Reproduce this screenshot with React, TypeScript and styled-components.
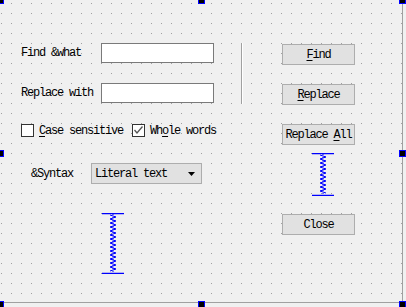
import React from "react";
import styled, { createGlobalStyle } from "styled-components";

const Global = createGlobalStyle`
  html, body { margin: 0; padding: 0; background: #f0f0f0; }
  body { width: 406px; height: 307px; overflow: hidden; }
  * { box-sizing: border-box; }
`;

const dot =
  "url(\"data:image/svg+xml,%3Csvg xmlns='http://www.w3.org/2000/svg' width='10' height='10'%3E%3Crect x='1' y='3' width='1' height='1' fill='%23a0a0a0'/%3E%3C/svg%3E\")";

const Canvas = styled.div`
  position: relative;
  width: 406px;
  height: 307px;
  overflow: hidden;
`;

const Form = styled.div`
  position: relative;
  width: 403px;
  height: 303px;
  background-color: #f0f0f0;
  background-image: ${dot};
  border-right: 1px solid #a0a0a0;
  border-bottom: 1px solid #a0a0a0;
  display: flex;
  padding-top: 43px;
  font-family: "Liberation Mono", "DejaVu Sans Mono", monospace;
  font-size: 12px;
  letter-spacing: -1.2px;
  color: #000;
`;

const LeftCol = styled.div`
  display: flex;
  flex-direction: column;
  padding-left: 21px;
  width: 214px;
`;

const FieldRow = styled.div<{ $mt?: number }>`
  display: flex;
  align-items: center;
  height: 20px;
  margin-top: ${(p) => p.$mt ?? 0}px;
`;

const Label = styled.span<{ $w: number; $ml?: number }>`
  width: ${(p) => p.$w}px;
  margin-left: ${(p) => p.$ml ?? 0}px;
  white-space: pre;
  line-height: 14px;
  flex: none;
`;

const LineEdit = styled.div`
  width: 113px;
  height: 20px;
  background: #fff;
  border: 1px solid #7a7a7a;
`;

const CheckRow = styled.div`
  display: flex;
  align-items: center;
  height: 15px;
  margin-top: 20px;
`;

const CheckBox = styled.div<{ $ml?: number }>`
  width: 13px;
  height: 13px;
  border: 1px solid #333;
  background: #fff;
  margin-left: ${(p) => p.$ml ?? 0}px;
  margin-right: 5px;
  display: flex;
  align-items: center;
  justify-content: center;
  flex: none;
`;

const CheckText = styled.span`
  white-space: pre;
  line-height: 14px;
`;

const U = styled.span`
  text-decoration: underline;
  text-underline-offset: 2px;
`;

const SyntaxRow = styled.div`
  display: flex;
  align-items: center;
  height: 21px;
  margin-top: 25px;
`;

const Combo = styled.div`
  width: 111px;
  height: 21px;
  background: #e1e1e1;
  border: 1px solid #adadad;
  display: flex;
  align-items: center;
  justify-content: space-between;
  padding: 0 6px 0 3px;
  line-height: 14px;
  flex: none;
`;

const SpacerBox = styled.div<{ $mt: number; $ml: number; $h: number }>`
  margin-top: ${(p) => p.$mt}px;
  margin-left: ${(p) => p.$ml}px;
  width: 22px;
  height: ${(p) => p.$h}px;
  flex: none;
`;

const Divider = styled.div`
  width: 1px;
  height: 61px;
  margin-left: 27px;
  background: #a0a0a0;
  box-shadow: 1px 0 0 #ffffff;
  flex: none;
`;

const RightCol = styled.div`
  display: flex;
  flex-direction: column;
  margin-left: 40px;
  padding-top: 1px;
`;

const Button = styled.div<{ $mt?: number }>`
  width: 73px;
  height: 21px;
  margin-top: ${(p) => p.$mt ?? 0}px;
  background: #e1e1e1;
  border: 1px solid #adadad;
  display: flex;
  align-items: center;
  justify-content: center;
  white-space: pre;
  line-height: 14px;
`;

const Handle = styled.div<{ $x: number; $y: number }>`
  position: absolute;
  left: ${(p) => p.$x - 3}px;
  top: ${(p) => p.$y - 3}px;
  width: 7px;
  height: 7px;
  background: #000;
  border: 1px solid #0000ff;
`;

function Spring({ h }: { h: number }) {
  const top = 1;
  const bottom = h - 1;
  const pts: string[] = [];
  let left = true;
  for (let y = top + 1; y <= bottom - 1; y += 2) {
    pts.push(`${left ? 8 : 14},${y}`);
    left = !left;
  }
  return (
    <svg width="22" height={h} viewBox={`0 0 22 ${h}`}>
      <line x1="0" y1="0.5" x2="22" y2="0.5" stroke="#0000ff" strokeWidth="1.5" />
      <line x1="0" y1={h - 0.5} x2="22" y2={h - 0.5} stroke="#0000ff" strokeWidth="1.5" />
      <polyline points={pts.join(" ")} fill="none" stroke="#0000ff" strokeWidth="1" />
      <line x1="11" y1="1" x2="11" y2={h - 1} stroke="#0000ff" strokeWidth="1" strokeDasharray="1 2" />
    </svg>
  );
}

export default function App() {
  return (
    <Canvas>
      <Global />
      <Form>
        <LeftCol>
          <FieldRow>
            <Label $w={80}>Find &amp;what</Label>
            <LineEdit />
          </FieldRow>
          <FieldRow $mt={20}>
            <Label $w={80}>Replace with</Label>
            <LineEdit />
          </FieldRow>
          <CheckRow>
            <CheckBox />
            <CheckText>
              <U>C</U>ase sensitive
            </CheckText>
            <CheckBox $ml={9}>
              <svg width="11" height="11" viewBox="0 0 11 11">
                <polyline points="1.5,5 4,8 9.5,1.5" fill="none" stroke="#555" strokeWidth="1.3" />
              </svg>
            </CheckBox>
            <CheckText>
              Wh<U>o</U>le words
            </CheckText>
          </CheckRow>
          <SyntaxRow>
            <Label $w={60} $ml={10}>&amp;Syntax</Label>
            <Combo>
              <span>Literal text</span>
              <svg width="7" height="4" viewBox="0 0 7 4">
                <polygon points="0,0 7,0 3.5,4" fill="#000" />
              </svg>
            </Combo>
          </SyntaxRow>
          <SpacerBox $mt={29} $ml={81} $h={61}>
            <Spring h={61} />
          </SpacerBox>
        </LeftCol>
        <Divider />
        <RightCol>
          <Button>
            <span>
              <U>F</U>ind
            </span>
          </Button>
          <Button $mt={19}>
            <span>
              <U>R</U>eplace
            </span>
          </Button>
          <Button $mt={19}>
            <span>
              Replace <U>A</U>ll
            </span>
          </Button>
          <SpacerBox $mt={8} $ml={30} $h={43}>
            <Spring h={43} />
          </SpacerBox>
          <Button $mt={18}>Close</Button>
        </RightCol>
        <Handle $x={0} $y={0} />
        <Handle $x={201} $y={0} />
        <Handle $x={402} $y={0} />
        <Handle $x={402} $y={153} />
        <Handle $x={402} $y={304} />
        <Handle $x={201} $y={304} />
        <Handle $x={0} $y={304} />
        <Handle $x={0} $y={153} />
      </Form>
    </Canvas>
  );
}
